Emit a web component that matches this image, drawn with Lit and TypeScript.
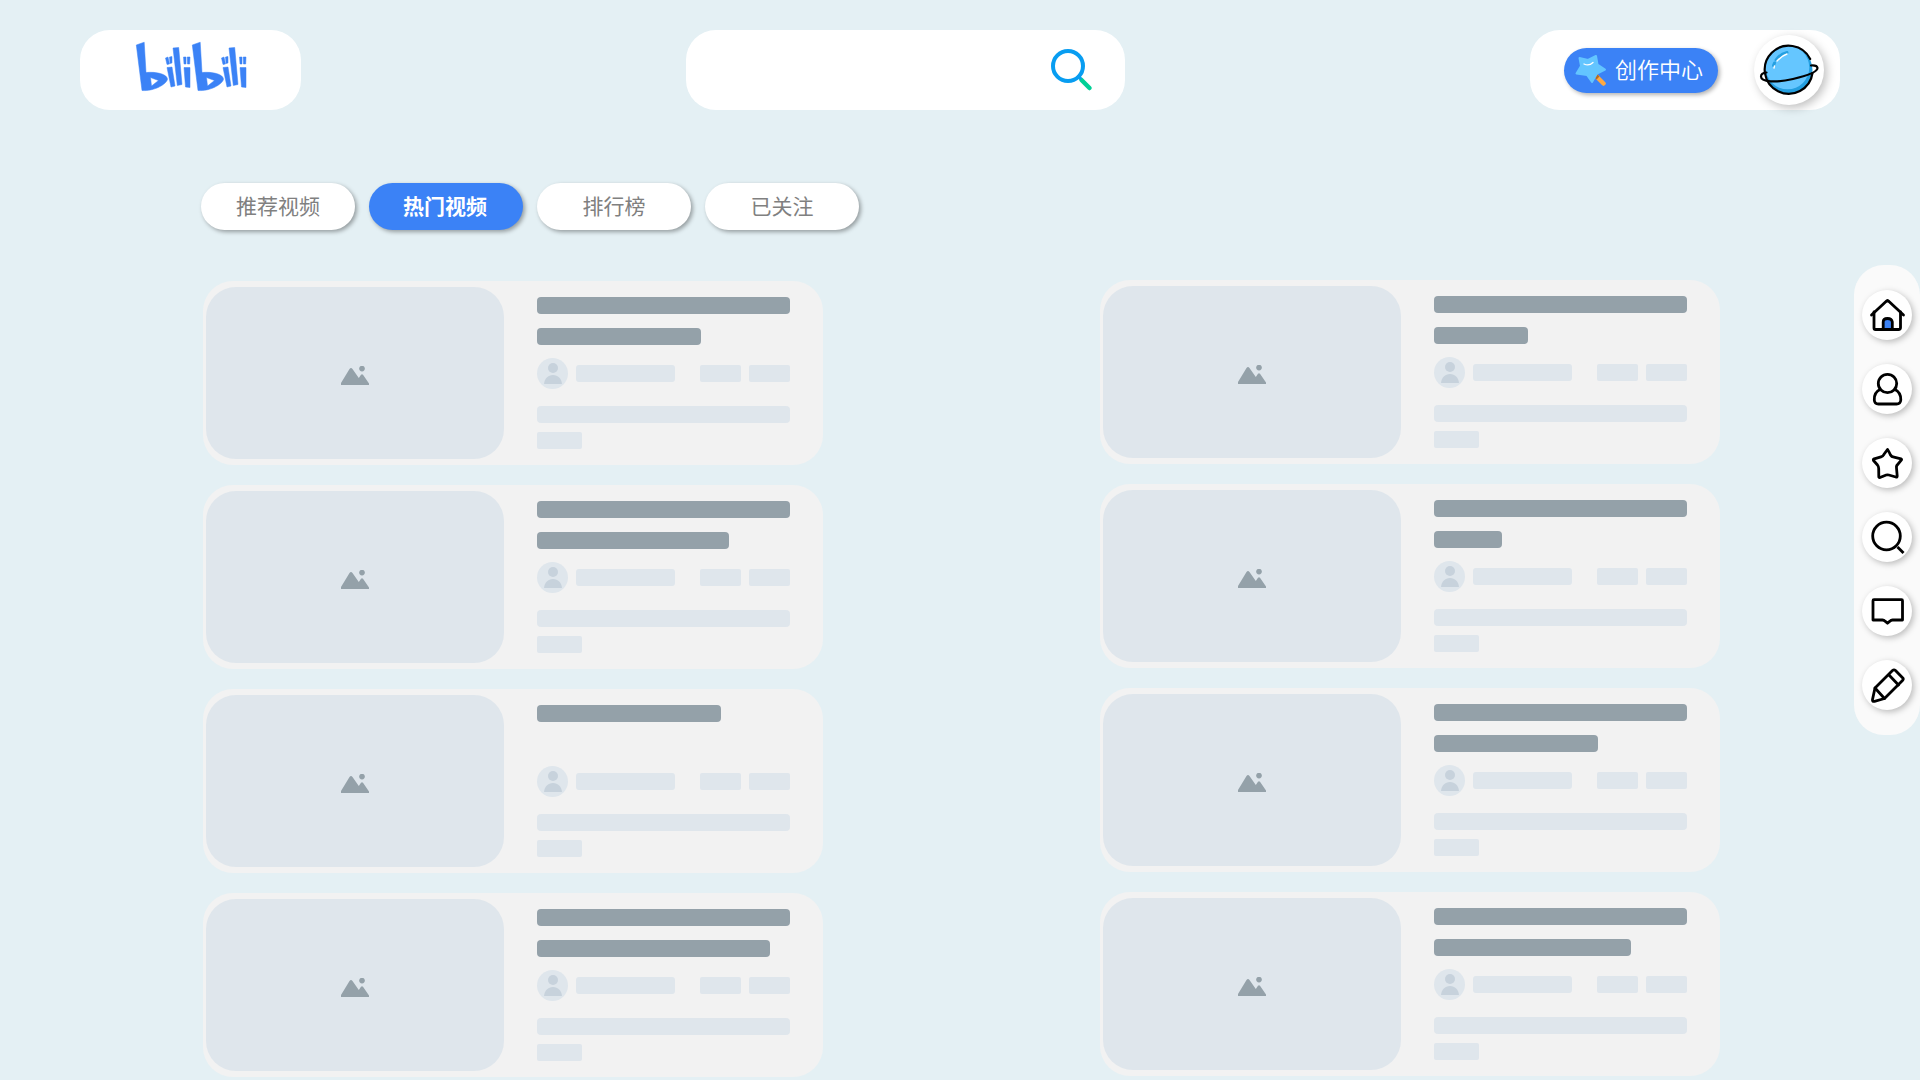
import { LitElement, html, css, svg } from "lit";
import { customElement, property } from "lit/decorators.js";

const TABS = ["推荐视频", "热门视频", "排行榜", "已关注"];
const ACTIVE_TAB = 1;

/* Widths, in pixels, of each card's title lines. */
const LEFT_CARDS = [[253, 164], [253, 192], [184], [253, 233]];
const RIGHT_CARDS = [[253, 94], [253, 68], [253, 164], [253, 197]];

const NAV_ICONS = [
  svg`<path d="M12 22V38Q12 39.500 13.500 39.500H36.500Q38.500 39.500 38.500 37.500V22"/><path d="M9.500 25 24 11.500 25.500 10.500 27 11.500 41.500 25"/><path class="accent" d="M21.200 39.500V32Q21.200 28.500 25.500 28.500T30.300 32V39.500Z"/>`,
  svg`<circle cx="25.500" cy="19.500" r="9.200"/><path d="M18 25.500C14 27.500 12 31 12.300 36Q12.500 40 16.500 40H34.500Q38.500 40 38.800 36C39 31 37 27.500 33 25.500"/>`,
  svg`<path d="M25.500 11.500Q27.200 14 28.500 17Q29.500 18.800 32 19.200L39 20.800Q40 21.200 39.300 22.200L34.800 27.500Q34.300 28.500 34.500 30L35.200 38Q35.200 39.500 33.800 39L26.800 37Q25.500 36.600 24.200 37L18 39.500Q16.800 40 16.800 38.500L16.700 30.500Q16.700 28.500 15.500 27L11.500 22.500Q11 21.300 12.200 20.800L19 18.800Q21 18.200 22 16.300L25.500 11.500Z"/>`,
  svg`<circle cx="24.500" cy="24" r="13.800"/><path class="flat" d="M35.500 35 41.500 41"/>`,
  svg`<path d="M12 13.700H39.500Q40.500 13.700 40.500 14.700V34H30.500Q29 34 28 35.200L25.500 37.200 23 35.200Q22 34 20.500 34H11V14.700Q11 13.700 12 13.700Z"/>`,
  svg`<path d="M30.500 10.500Q32 9.200 33.500 10.500L40.800 18Q41.800 19.200 40.500 20.500L22.500 38.500 12.500 41.300Q10.200 41.800 10.500 39.500L13 28Z"/><path d="M27 15 36.500 25M13 28 22.500 38.500"/>`,
];

@customElement("video-skeleton")
export class VideoSkeleton extends LitElement {
  @property({ attribute: false }) lines: number[] = [];

  static styles = css`
    :host { display: block; }
    .card { display: flex; box-sizing: border-box; width: 620px; height: 184px; padding: 6px 3px; border-radius: 30px; background: #f2f2f2; }
    .cover { display: flex; align-items: center; justify-content: center; width: 298px; height: 172px; border-radius: 30px; background: #dfe6ec; }
    .cover svg { width: 28px; height: 19px; margin-top: 5px; fill: #94a1a9; }
    .info { display: flex; flex-direction: column; width: 253px; margin: 10px 0 0 33px; }
    .titles { display: flex; flex-direction: column; gap: 14px; height: 48px; }
    .title { height: 17px; border-radius: 4px; background: #94a1a9; }
    .author { display: flex; align-items: center; height: 31px; margin-top: 13px; }
    .face { width: 31px; height: 31px; }
    .block { height: 17px; border-radius: 3px; background: #dfe6ec; }
    .name { width: 99px; margin: 0 25px 0 8px; }
    .stat { width: 41px; border-radius: 2px; }
    .stat + .stat { margin-left: 8px; }
    .desc { margin-top: 17px; border-radius: 4px; }
    .rest { width: 45px; margin-top: 9px; border-radius: 2px; }
  `;

  render() {
    return html`
      <div class="card">
        <div class="cover">
          <svg viewBox="0 0 28 19"><path d="M0 17 8.500 3Q10 1 11.500 3L17.800 12 20 8.800Q21 7.500 22 8.800L28 17.500V19H0Z"/><circle cx="21" cy="2.600" r="2.800"/></svg>
        </div>
        <div class="info">
          <div class="titles">${this.lines.map((w) => html`<div class="title" style="width:${w}px"></div>`)}</div>
          <div class="author">
            <svg class="face" viewBox="0 0 31 31"><circle cx="15.500" cy="15.500" r="15.500" fill="#dfe6ec"/><g fill="#c7d2dc"><circle cx="16" cy="10" r="5"/><path d="M7 26C7.500 20.500 11 17 16 17S24.500 20.500 25 26Z"/></g></svg>
            <div class="block name"></div>
            <div class="block stat"></div>
            <div class="block stat"></div>
          </div>
          <div class="block desc"></div>
          <div class="block rest"></div>
        </div>
      </div>
    `;
  }
}

@customElement("app-root")
export class AppRoot extends LitElement {
  static styles = css`
    :host { display: block; position: relative; width: 1920px; height: 1080px; overflow: hidden; background: #e4f0f4; font-family: "Noto Sans CJK SC", sans-serif; }
    .header { display: flex; justify-content: space-between; padding: 30px 80px 0; }
    .pill { display: flex; align-items: center; box-sizing: border-box; height: 80px; border-radius: 30px; background: #fff; }
    .brand { width: 221px; padding-left: 56px; }
    .brand svg { width: 112px; height: 50px; margin-top: -8px; fill: #3b82f6; stroke: #3b82f6; stroke-width: 0.500; overflow: visible; }
    .search { width: 439px; margin-right: 20px; justify-content: flex-end; padding-right: 31px; }
    .search svg { width: 43px; height: 43px; margin-top: 1px; fill: none; stroke-linecap: round; }
    .user { width: 310px; padding: 0 16px 0 34px; justify-content: space-between; }
    .create { display: flex; align-items: center; box-sizing: border-box; width: 154px; height: 45px; padding-left: 11px; border-radius: 23px; background: #3b82f6; color: #fff; font-size: 22px; font-weight: 350; white-space: nowrap; box-shadow: 2px 2px 4px rgba(0,0,0,.3); }
    .create svg { width: 32px; height: 32px; margin-right: 8px; }
    .create span { height: 45px; line-height: 41px; }
    .avatar { width: 70px; height: 70px; border-radius: 50%; background: #fff; box-shadow: 3px 3px 10px rgba(0,0,0,.25); }
    .avatar svg { display: block; width: 70px; height: 70px; }
    .tabs { display: flex; gap: 14px; margin: 73px 0 0 201px; }
    .tab { box-sizing: border-box; width: 154px; height: 47px; border-radius: 24px; background: #fff; color: #808080; font-size: 21px; line-height: 45px; text-align: center; box-shadow: 2px 2px 4px rgba(0,0,0,.35); }
    .active { padding-right: 2px; background: #3b82f6; color: #fff; font-weight: 700; }
    .feed { display: flex; gap: 277px; margin: 50px 0 0 203px; }
    .column { display: flex; flex-direction: column; gap: 20px; margin-top: 1px; }
    .column + .column { margin-top: 0; }
    .rail { position: absolute; top: 265px; right: 0; display: flex; flex-direction: column; align-items: center; gap: 24px; box-sizing: border-box; width: 66px; height: 470px; padding-top: 25px; border-radius: 30px; background: #fafafa; }
    .nav { width: 50px; height: 50px; border-radius: 50%; background: #fff; box-shadow: 2px 2px 6px rgba(0,0,0,.25); }
    .nav svg { display: block; width: 50px; height: 50px; fill: none; stroke: #000; stroke-width: 2.800; stroke-linecap: round; stroke-linejoin: round; }
    .accent { fill: #3b82f6; }
    .flat { stroke-linecap: butt; }
  `;

  private logoHalf(x: number) {
    return svg`<g transform="translate(${x} 0)">
      <path fill-rule="evenodd" d="M0.300 4 8.200 1.200 10 31.500C20 30.500 31 33 31.500 38C31 43 18 50.500 6 49.500Z M14.500 36.500 15.500 45 22.500 39.500Z"/>
      <path d="M29.500 17 32 16 33.500 23 31 23.500ZM33.500 16 36 15.500 36 22 34 22.500ZM31 26.500 36 26 39 45 35 46ZM37 7 42.700 6.500 46 43.500 41.300 44.500ZM47.500 16 50 16 50 23 48 23ZM51.200 16 54 16 53.700 23 51.500 23ZM48 26.500 54 26.500 54 46.500 49.500 46Z"/>
    </g>`;
  }

  render() {
    return html`
      <div class="header">
        <div class="pill brand"><svg viewBox="0 0 112 50">${this.logoHalf(0)}${this.logoHalf(56)}</svg></div>
        <div class="pill search">
          <svg viewBox="0 0 43 43"><path stroke="#00d096" stroke-width="4.500" d="M30.500 31 38.500 39"/><circle cx="17" cy="17" r="15" stroke="#089df1" stroke-width="4"/><path stroke="#089df1" stroke-width="3.500" d="M27.500 27.500 29 29"/></svg>
        </div>
        <div class="pill user">
          <div class="create">
            <svg viewBox="0 0 32 32"><path d="M20.500 21.500 28.500 29.500" stroke="#ffa940" stroke-width="4.500" stroke-linecap="round"/><path d="M20.500 21.500 23 24" stroke="#b86b20" stroke-width="4"/><path d="M21 2 22.500 10.500 30 15.500 22 19.500 17 28 12 21 1.500 19.500 6 12 4.500 4 13 6Z" fill="#63c5ff" stroke="#63c5ff" stroke-width="2" stroke-linejoin="round"/><path d="M9 10Q14 12.500 18 8.500" fill="none" stroke="#fff" stroke-width="1.300" stroke-linecap="round"/></svg>
            <span>创作中心</span>
          </div>
          <div class="avatar">
            <svg viewBox="0 0 70 70" fill="none" stroke-linecap="round">
              <circle cx="35" cy="35" r="23.500" fill="#259fe0"/>
              <circle cx="33.500" cy="32.500" r="21.800" fill="#65c6ff"/>
              <path d="M22 25Q26 19 33 17.500" stroke="#259fe0" stroke-width="3"/>
              <path d="M19.500 30.500 20.500 28" stroke="#259fe0" stroke-width="3"/>
              <path d="M23 26Q28 20.500 33 19M20 33 20.500 31" stroke="#fff" stroke-width="1.400"/>
              <path d="M56.200 24A24 24 0 1 0 58.500 38" stroke="#000" stroke-width="2.200"/>
              <path d="M12.500 37.500Q7 38 7 41.500C7 47 22 48 39 44C54 40.500 63.500 37 63.500 33Q63 30 57 30.500" stroke="#000" stroke-width="2.200"/>
            </svg>
          </div>
        </div>
      </div>
      <div class="tabs">${TABS.map((t, i) => html`<div class="tab ${i === ACTIVE_TAB ? "active" : ""}">${t}</div>`)}</div>
      <div class="feed">
        ${[LEFT_CARDS, RIGHT_CARDS].map((cards) => html`<div class="column">${cards.map((c) => html`<video-skeleton .lines=${c}></video-skeleton>`)}</div>`)}
      </div>
      <div class="rail">${NAV_ICONS.map((icon) => html`<div class="nav"><svg viewBox="0 0 50 50">${icon}</svg></div>`)}</div>
    `;
  }
}
